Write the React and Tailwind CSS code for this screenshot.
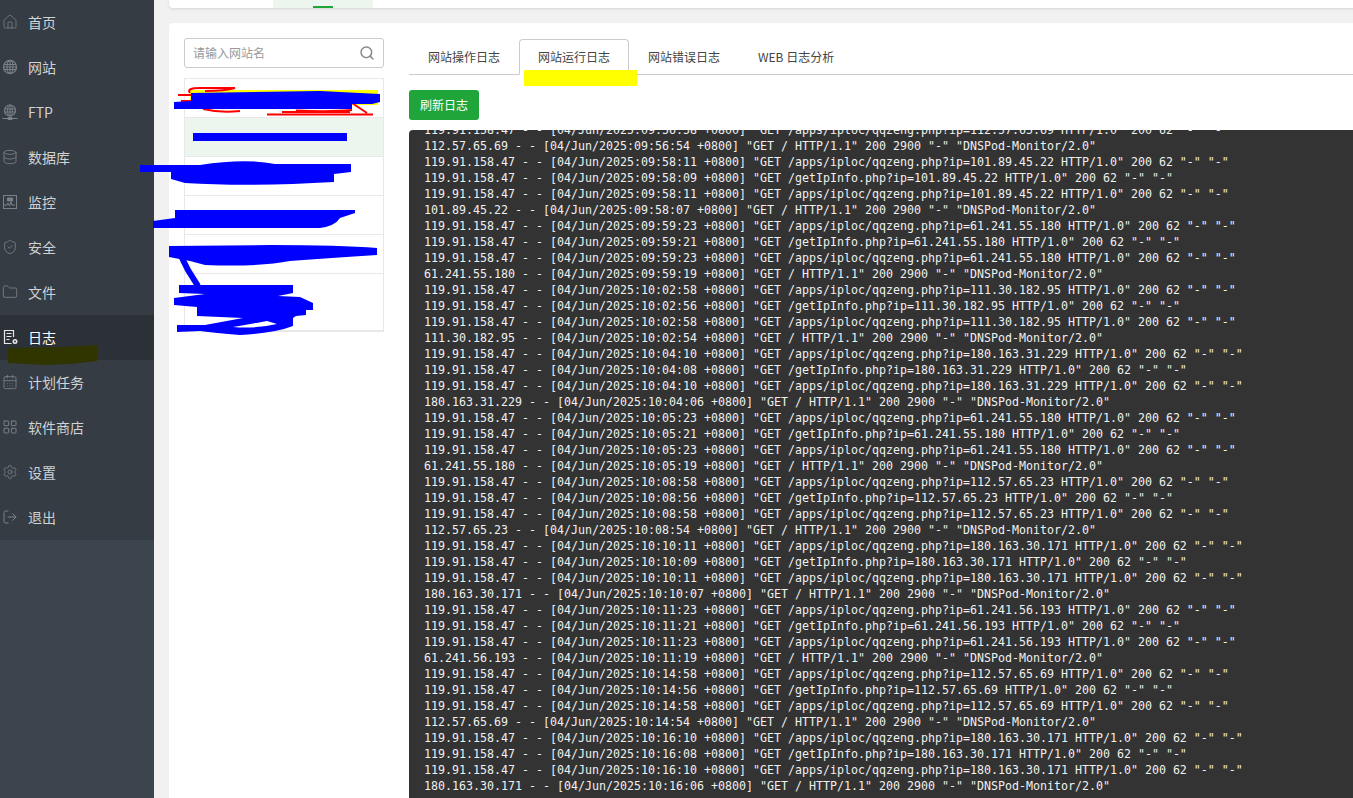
// App.jsx
import React from 'react'
import { Home, Database, ShieldCheck, Folder, CalendarDays, LayoutGrid, Settings, LogOut, Search } from 'lucide-react'

const globeIcon = (
  <svg width="16" height="16" viewBox="0 0 16 16" fill="none" stroke="currentColor" strokeWidth="1">
    <circle cx="8" cy="8" r="6.5" strokeWidth="1.3" />
    <ellipse cx="8" cy="8" rx="3" ry="6.5" />
    <path d="M2 5.5h12M1.5 8h13M2 10.5h12M8 1.5v13" />
  </svg>
)

const ftpIcon = (
  <svg width="16" height="16" viewBox="0 0 16 16" fill="none" stroke="currentColor" strokeWidth="1">
    <circle cx="8" cy="6.5" r="5.5" strokeWidth="1.2" />
    <ellipse cx="8" cy="6.5" rx="2.5" ry="5.5" />
    <path d="M2.5 5h11M2.5 8h11M8 1v11M0.5 14.5h15M6 13.5h4v2H6z" />
  </svg>
)

const monitorIcon = (
  <svg width="16" height="16" viewBox="0 0 16 16" fill="none" stroke="currentColor" strokeWidth="1">
    <rect x="1.5" y="1.5" width="13" height="13" />
    <path d="M2 11h3l1-2 1.5 3 1.5-4 1 3h3" />
    <path d="M5.5 4h5v3h-5z" fill="currentColor" />
  </svg>
)

const logIcon = (
  <svg width="16" height="16" viewBox="0 0 16 16" fill="none" stroke="currentColor" strokeWidth="1.2">
    <path d="M11.5 8V1.5h-9v13h7" />
    <path d="M4.5 4.5h5M4.5 7.5h5M4.5 10.5h3" />
    <circle cx="13" cy="12.5" r="1.7" strokeWidth="1.6" />
  </svg>
)

const menu = [
  { label: '首页', icon: <Home size={16} strokeWidth={1.2} /> },
  { label: '网站', icon: globeIcon },
  { label: 'FTP', icon: ftpIcon },
  { label: '数据库', icon: <Database size={16} strokeWidth={1.3} /> },
  { label: '监控', icon: monitorIcon },
  { label: '安全', icon: <ShieldCheck size={16} strokeWidth={1.3} /> },
  { label: '文件', icon: <Folder size={16} strokeWidth={1.3} /> },
  { label: '日志', icon: logIcon, active: true },
  { label: '计划任务', icon: <CalendarDays size={16} strokeWidth={1.3} /> },
  { label: '软件商店', icon: <LayoutGrid size={16} strokeWidth={1.5} /> },
  { label: '设置', icon: <Settings size={16} strokeWidth={1.2} /> },
  { label: '退出', icon: <LogOut size={16} strokeWidth={1.5} /> },
]

const tabs = ['网站操作日志', '网站运行日志', '网站错误日志', 'WEB 日志分析']

const monitorGroups = [
  ['101.89.45.22', '09:58:11', '09:58:09', '09:58:07'],
  ['61.241.55.180', '09:59:23', '09:59:21', '09:59:19'],
  ['111.30.182.95', '10:02:58', '10:02:56', '10:02:54'],
  ['180.163.31.229', '10:04:10', '10:04:08', '10:04:06'],
  ['61.241.55.180', '10:05:23', '10:05:21', '10:05:19'],
  ['112.57.65.23', '10:08:58', '10:08:56', '10:08:54'],
  ['180.163.30.171', '10:10:11', '10:10:09', '10:10:07'],
  ['61.241.56.193', '10:11:23', '10:11:21', '10:11:19'],
  ['112.57.65.69', '10:14:58', '10:14:56', '10:14:54'],
  ['180.163.30.171', '10:16:10', '10:16:08', '10:16:06'],
]

const server = '119.91.158.47 - - [04/Jun/2025:'
const iploc = (ip, t) => `${server}${t} +0800] "GET /apps/iploc/qqzeng.php?ip=${ip} HTTP/1.0" 200 62 "-" "-"`
const ipinfo = (ip, t) => `${server}${t} +0800] "GET /getIpInfo.php?ip=${ip} HTTP/1.0" 200 62 "-" "-"`
const client = (ip, t) => `${ip} - - [04/Jun/2025:${t} +0800] "GET / HTTP/1.1" 200 2900 "-" "DNSPod-Monitor/2.0"`

const logLines = [
  iploc('112.57.65.69', '09:56:58'),
  client('112.57.65.69', '09:56:54'),
  ...monitorGroups.flatMap(([ip, a, b, c]) => [iploc(ip, a), ipinfo(ip, b), iploc(ip, a), client(ip, c)]),
]

// 截图上的涂抹痕迹
function Scribbles() {
  return (
    <svg className="absolute inset-0 pointer-events-none" width="1353" height="798" viewBox="0 0 1353 798">
      <path d="M8 348 L60 347 L97 345 L97 361 L70 364 L45 365 L8 363 Z" fill="#303500" />
      <rect x="524" y="70" width="113" height="16" fill="#ffff00" />
      <path d="M190 90 H378 V105 H190 Z" fill="#ffff00" />
      <path
        d="M190 93 Q186 88 200 88 L235 88 Q225 91 205 91 M178 95 H192 M181 101 H192 M203 109 Q220 113 240 111 M267 114.5 H373 M282 112 H350 M296 110.5 Q330 112 352 110 M352 103 L367 113"
        fill="none"
        stroke="#ff0000"
        strokeWidth="2"
      />
      <path d="M191 93 L320 91 L380 94 L380 102 L372 104 L352 104 L352 109 L174 109 L174 102 L191 101 Z" fill="#0000ff" />
      <rect x="193" y="133" width="154" height="8" fill="#0000ff" />
      <path d="M140 165 L200 165 Q245 158 275 164 L351 164 L351 172 L334 174 L334 182 Q250 187 185 183 L171 179 L171 172 L140 172 Z" fill="#0000ff" />
      <path d="M175 210 L355 210 L355 213 L340 218 Q335 226 320 228 L153 228 L153 221 L175 218 Z" fill="#0000ff" />
      <path d="M169 246 L270 245 Q340 245 377 248 L377 255 Q330 258 290 261 Q260 267 205 265 L190 261 L169 257 Z" fill="#0000ff" />
      <path d="M182 258 L188 270 L198 286" fill="none" stroke="#0000ff" strokeWidth="6" />
      <path d="M179 285 H293 V293 L278 296 L300 297 L313 303 V310 H306 V315 L296 316 L293 318 V326 Q275 333 240 335 Q215 333 200 331 L177 332 V325 L205 325 L243 318 L197 316 V307 L174 305 V298 L205 294 L179 293 Z" fill="#0000ff" />
      <path d="M233 327 Q250 324 267 321 L277 324 Q255 329 233 327 Z" fill="#ffffff" />
    </svg>
  )
}

export default function App() {
  return (
    <div className="relative flex h-[798px] w-[1353px] overflow-hidden bg-[#f1f1f1] font-['Noto_Sans_CJK_SC','Liberation_Sans',sans-serif]">
      <aside className="w-[154px] shrink-0 bg-[#3c444e]">
        <nav className="bg-[#353c44]">
          {menu.map((item) => (
            <div
              key={item.label}
              className={`flex h-[45px] items-center gap-[10px] pb-[2px] pl-[2px] text-sm ${
                item.active ? 'bg-[#2c3138] text-white' : 'text-[#d0d2d4]'
              }`}
            >
              <span className={`flex w-4 justify-center ${item.active ? 'text-[#e8e8e8]' : 'text-[#7b8188]'}`}>{item.icon}</span>
              {item.label}
            </div>
          ))}
        </nav>
      </aside>

      <main className="flex min-w-0 flex-1 flex-col pl-[15px]">
        <div className="mr-[-8px] h-2 shrink-0 rounded-b bg-white pl-[104px] shadow-[0_1px_3px_rgba(0,0,0,0.12)]">
          <div className="flex h-2 w-[100px] justify-center bg-[#edf5ef]">
            <div className="mt-[6px] h-[2px] w-5 bg-[#20a53a]" />
          </div>
        </div>

        <section className="mr-[-8px] mt-[15px] flex min-h-0 flex-1 rounded-tl bg-white pl-[15px] pt-[15px]">
          <div className="w-[200px] shrink-0">
            <div className="flex h-[30px] items-center justify-between rounded-[3px] border border-[#ccc] pl-2 pr-2 text-xs text-[#999]">
              请输入网站名
              <Search size={16} strokeWidth={2.2} className="text-[#888]" />
            </div>
            <div className="mt-[10px] border border-b-2 border-[#e8e8e8]">
              <div className="h-[39px] border-b border-[#e8e8e8]" />
              <div className="h-[39px] border-b border-[#e8e8e8] bg-[#edf5ef]" />
              <div className="h-[39px] border-b border-[#e8e8e8]" />
              <div className="h-[39px] border-b border-[#e8e8e8]" />
              <div className="h-[39px] border-b border-[#e8e8e8]" />
              <div className="h-[56px]" />
            </div>
          </div>

          <div className="ml-[25px] flex min-w-0 flex-1 flex-col">
            <div className="flex h-[37px] shrink-0 items-end border-b border-[#ccc] pt-px">
              {tabs.map((tab, i) => (
                <div
                  key={tab}
                  className={`mb-[-1px] flex h-[36px] w-[110px] items-center pl-[18px] text-xs text-[#444] ${
                    i === 1 ? 'rounded-t border border-b-white border-[#ccc]' : 'border border-transparent'
                  }`}
                >
                  {tab}
                </div>
              ))}
            </div>
            <button className="mt-[15px] h-[30px] w-[70px] shrink-0 rounded-[3px] bg-[#20a53a] text-xs text-white">刷新日志</button>
            <pre className="mt-[10px] min-h-0 flex-1 overflow-hidden rounded-t bg-[#333] pl-[15px] font-['DejaVu_Sans_Mono',monospace] text-[11.63px] leading-4 text-[#f0f0f0]">
              <div className="-mt-2">
                {logLines.map((line, i) => (
                  <div key={i}>{line}</div>
                ))}
              </div>
            </pre>
          </div>
        </section>
      </main>

      <Scribbles />
    </div>
  )
}
